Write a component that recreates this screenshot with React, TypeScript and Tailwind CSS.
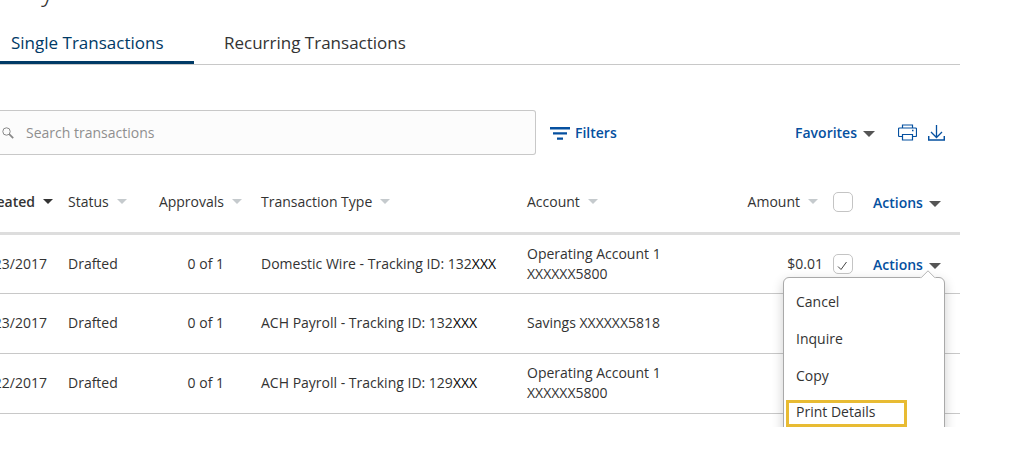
import React from 'react';

interface Transaction {
  created: string;
  status: string;
  approvals: string;
  type: string;
  account: string[];
  amount?: string;
}

const transactions: Transaction[] = [
  {
    created: '10/23/2017',
    status: 'Drafted',
    approvals: '0 of 1',
    type: 'Domestic Wire - Tracking ID: 132',
    account: ['Operating Account 1', 'XXXXXX5800'],
    amount: '$0.01',
  },
  {
    created: '10/23/2017',
    status: 'Drafted',
    approvals: '0 of 1',
    type: 'ACH Payroll - Tracking ID: 132',
    account: ['Savings XXXXXX5818'],
  },
  {
    created: '10/22/2017',
    status: 'Drafted',
    approvals: '0 of 1',
    type: 'ACH Payroll - Tracking ID: 129',
    account: ['Operating Account 1', 'XXXXXX5800'],
  },
];

const SortCaret: React.FC<{ active?: boolean }> = ({ active }) => (
  <svg
    viewBox="0 0 10 5"
    className={active ? 'h-[5px] w-2.5 shrink-0 text-[#333]' : 'h-[5px] w-2.5 shrink-0 text-[#c5cacd]'}
    fill="currentColor"
  >
    <path d="M0 0h10L5 5z" />
  </svg>
);

const MenuCaret: React.FC = () => (
  <svg viewBox="0 0 12 6" className="mt-0.5 h-1.5 w-3 shrink-0 text-[#555]" fill="currentColor">
    <path d="M0 0h12L6 6z" />
  </svg>
);

const ActionsButton: React.FC = () => (
  <button className="flex items-center gap-1.5 pt-0.5 font-semibold text-[#0550a0]">
    Actions
    <MenuCaret />
  </button>
);

const Checkbox: React.FC<{ label: string; checked?: boolean }> = ({ label, checked }) => (
  <label className="relative ml-2.5 block size-5">
    <input
      type="checkbox"
      aria-label={label}
      defaultChecked={checked}
      className="peer block size-5 appearance-none rounded-[5px] border border-[#c4c4c4] bg-white"
    />
    <svg
      viewBox="0 0 20 20"
      className="pointer-events-none absolute inset-0 hidden size-5 peer-checked:block"
      fill="none"
      stroke="#444"
      strokeWidth="1"
    >
      <path d="M5 12.5l3 3 5.5-7.5" />
    </svg>
  </label>
);

const ActionsMenu: React.FC = () => (
  <div className="absolute top-[42px] right-[15px] z-10 w-[162px] rounded-md border border-[#a9a9a9] bg-white pt-1.5 pb-6 text-[#333] shadow-[0_4px_12px_rgba(0,0,0,0.2)]">
    <svg viewBox="0 0 16 9" className="absolute -top-2 right-2 h-[9px] w-4" fill="#fff" stroke="#b5b5b5">
      <path d="M0 9V7.5h1L8 .8l7 6.700h1V9" stroke="none" />
      <path d="M.5 7.700h.7L8 .8l6.800 6.900h.7" fill="none" />
    </svg>
    <ul>
      {['Cancel', 'Inquire', 'Copy'].map((item) => (
        <li key={item}>
          <button className="block h-[37px] w-full px-3 text-left">{item}</button>
        </li>
      ))}
      <li className="px-0.5 pt-[5px]">
        <button className="flex h-[27px] w-[121px] items-center border-3 border-[#e8bb33] px-[7px] pb-0.5">
          Print Details
        </button>
      </li>
    </ul>
  </div>
);

const Tabs: React.FC = () => (
  <nav className="flex border-b border-[#c8c8c8] text-[17px] leading-6">
    <a href="#single" className="w-[194px] border-b-3 border-[#003a66] pt-4 pb-1.5 pl-[11px] text-[#003a66]">
      Single Transactions
    </a>
    <a href="#recurring" className="px-[30px] pt-4 pb-1.5">
      Recurring Transactions
    </a>
  </nav>
);

const Toolbar: React.FC = () => (
  <div className="mt-[45px] flex items-center pr-[15px] font-semibold text-[#0550a0]">
    <label className="flex h-[45px] w-[536px] items-center gap-3 rounded-r-[3px] border border-l-0 border-[#c8c8c8] bg-[#fcfcfc] pl-0.5">
      <svg viewBox="0 0 12 12" className="size-3 shrink-0" fill="none" stroke="#888">
        <circle cx="4.500" cy="4.500" r="3.700" />
        <path d="M7.200 7.200l4 4" strokeWidth="1.800" />
      </svg>
      <input
        type="text"
        aria-label="Search transactions"
        placeholder="Search transactions"
        className="min-w-0 flex-1 bg-transparent font-normal outline-none placeholder:text-[#8f8f8f]"
      />
    </label>
    <button className="ml-3.5 flex items-center gap-[5px]">
      <svg viewBox="0 0 20 13" className="mt-0.5 h-[13px] w-5" fill="currentColor">
        <path d="M0 0h20v2.400H0zM3 5.200h14v2.400H3zM7 10.400h6v2.400H7z" />
      </svg>
      Filters
    </button>
    <button className="ml-auto flex items-center gap-1.5">
      Favorites
      <MenuCaret />
    </button>
    <button aria-label="Print" className="ml-[23px]">
      <svg viewBox="0 0 19 17" className="h-[17px] w-[19px]" fill="none" stroke="currentColor" strokeWidth="1.200">
        <path d="M4.500 4V1h10v3M4.500 12.500h-3a1 1 0 0 1-1-1V5a1 1 0 0 1 1-1h16a1 1 0 0 1 1 1v6.500a1 1 0 0 1-1 1h-3" />
        <path d="M4.500 10.500h10v5.500h-10z" />
        <path d="M14 6.500h1.500" strokeWidth="1.500" />
      </svg>
    </button>
    <button aria-label="Download" className="ml-[11px]">
      <svg viewBox="0 0 17 16" className="h-4 w-[17px]" fill="none" stroke="currentColor" strokeWidth="1.300">
        <path d="M8.500 0v12.500M3 7l5.500 5.500L14 7" />
        <path d="M.7 11v4h15.600v-4" strokeWidth="1.500" />
      </svg>
    </button>
  </div>
);

const TransactionTable: React.FC = () => (
  <table className="mt-[17px] w-full table-fixed text-left">
    <colgroup>
      <col className="w-[68px]" />
      <col className="w-20" />
      <col className="w-[113px]" />
      <col />
      <col className="w-[200px]" />
      <col className="w-24" />
      <col className="w-[50px]" />
      <col className="w-[87px]" />
    </colgroup>
    <thead>
      <tr className="h-[61px] border-b-3 border-[#ddd]">
        <th className="pr-[15px] font-semibold">
          <div className="flex items-center justify-end gap-2">
            Created
            <SortCaret active />
          </div>
        </th>
        <th className="font-normal">
          <div className="flex items-center gap-2">
            Status
            <SortCaret />
          </div>
        </th>
        <th className="pr-[19px] font-normal">
          <div className="flex items-center justify-end gap-2">
            Approvals
            <SortCaret />
          </div>
        </th>
        <th className="font-normal">
          <div className="flex items-center gap-2">
            Transaction Type
            <SortCaret />
          </div>
        </th>
        <th className="font-normal">
          <div className="flex items-center gap-2">
            Account
            <SortCaret />
          </div>
        </th>
        <th className="pr-[5px] font-normal">
          <div className="flex items-center justify-end gap-2">
            Amount
            <SortCaret />
          </div>
        </th>
        <th>
          <Checkbox label="Select all" />
        </th>
        <th>
          <ActionsButton />
        </th>
      </tr>
    </thead>
    <tbody>
      {transactions.map((row, index) => (
        <tr key={index} className="h-[60px] border-b border-[#c8c8c8]">
          <td className="pr-[21px]">
            <div className="flex justify-end">{row.created}</div>
          </td>
          <td>{row.status}</td>
          <td className="pr-[37px] text-right">{row.approvals}</td>
          <td>
            {row.type}
            <span className="text-black">XXX</span>
          </td>
          <td>
            {row.account.map((line) => (
              <div key={line}>{line}</div>
            ))}
          </td>
          <td className="text-right">{row.amount}</td>
          <td>{row.amount && <Checkbox label="Select transaction" checked />}</td>
          <td className="relative">
            {row.amount && (
              <>
                <ActionsButton />
                <ActionsMenu />
              </>
            )}
          </td>
        </tr>
      ))}
    </tbody>
  </table>
);

const App: React.FC = () => {
  return (
    <div className="bg-white font-['Open_Sans','Liberation_Sans',sans-serif] text-sm text-[#333]">
      <main className="overflow-hidden pr-[54px] pb-[13px]">
        <h1 className="flex h-[15px] w-[54px] items-end justify-end pb-2.5 text-[28px] leading-8 font-light">y</h1>
        <Tabs />
        <Toolbar />
        <TransactionTable />
      </main>
    </div>
  );
};

export default App;
